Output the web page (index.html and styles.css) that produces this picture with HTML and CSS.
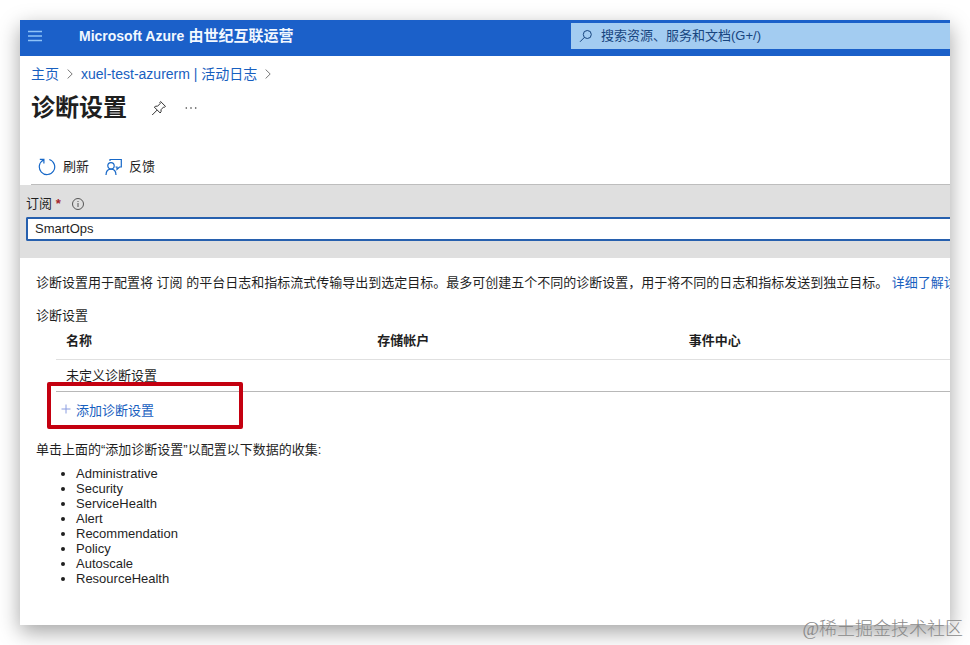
FILE: index.html
```html
<!DOCTYPE html>
<html lang="zh-CN">
<head>
<meta charset="utf-8">
<title>诊断设置 - Microsoft Azure</title>
<link rel="stylesheet" href="styles.css">
</head>
<body>
<div class="window">
  <header class="topbar">
    <button class="menu-button" type="button" aria-label="菜单">
      <svg width="14" height="12" viewBox="0 0 14 12" stroke="currentColor" stroke-width="1.3"><path d="M0 1.5h14M0 6h14M0 10.5h14"/></svg>
    </button>
    <div class="brand"><span class="brand-latin">Microsoft Azure</span> 由世纪互联运营</div>
    <label class="search">
      <svg width="14" height="14" viewBox="0 0 14 14" fill="none" stroke="currentColor"><circle cx="8.3" cy="5.5" r="4"/><path d="M5.4 8.4L1 12.8"/></svg>
      <input class="search-input" type="text" aria-label="搜索" placeholder="搜索资源、服务和文档(G+/)">
    </label>
  </header>

  <nav class="breadcrumb" aria-label="导航路径">
    <a href="#">主页</a>
    <svg width="6" height="10" viewBox="0 0 6 10" fill="none" stroke="currentColor"><path d="M.6.5L5.2 5 .6 9.500"/></svg>
    <a href="#">xuel-test-azurerm | 活动日志</a>
    <svg width="6" height="10" viewBox="0 0 6 10" fill="none" stroke="currentColor"><path d="M.6.5L5.2 5 .6 9.500"/></svg>
  </nav>

  <div class="title-row">
    <h1>诊断设置</h1>
    <button class="icon-button" type="button" aria-label="固定">
      <svg width="16" height="16" viewBox="0 0 16 16" fill="none" stroke="currentColor" stroke-linejoin="round"><path d="M9.600 1.500L14.500 6.400 13.500 7.200 12.600 7 10 9.700Q10.600 11.700 9.200 13L3.300 7.100Q4.700 5.700 6.600 6.200L9.200 3.500 8.900 2.300ZM6.200 10L1.200 15"/></svg>
    </button>
    <button class="icon-button" type="button" aria-label="更多">
      <svg width="12" height="4" viewBox="0 0 12 4" fill="currentColor"><circle cx="1.300" cy="2" r=".8"/><circle cx="6" cy="2" r=".8"/><circle cx="10.700" cy="2" r=".8"/></svg>
    </button>
  </div>

  <div class="commands">
    <button class="command" type="button">
      <svg width="18" height="18" viewBox="0 0 18 18" fill="none" stroke="currentColor" stroke-width="1.200"><path d="M5.500 2A7.700 7.700 0 1 0 11.300 1.500M1.800 1.400H5.900V5.500"/></svg>
      刷新
    </button>
    <button class="command" type="button">
      <svg width="17" height="18" viewBox="0 0 17 18" fill="none" stroke="currentColor" stroke-width="1.200"><path d="M5 3V1.500H16.300V9H14.500L12 11.300V9H10.500"/><circle cx="6" cy="7.800" r="3.200"/><path d="M1 17Q1.200 11.200 6 11.200T11 17"/></svg>
      反馈
    </button>
  </div>

  <section class="scope">
    <div class="scope-label">
      <label for="subscription">订阅 <span class="required">*</span></label>
      <svg width="12" height="12" viewBox="0 0 12 12" fill="none" stroke="currentColor"><circle cx="6" cy="6" r="5.500"/><path d="M6 5v4M6 3v1"/></svg>
    </div>
    <select class="scope-select" id="subscription"><option>SmartOps</option></select>
  </section>

  <main class="content">
    <p class="intro">诊断设置用于配置将 订阅 的平台日志和指标流式传输导出到选定目标。最多可创建五个不同的诊断设置，用于将不同的日志和指标发送到独立目标。 <a href="#">详细了解诊断设置</a></p>
    <h2>诊断设置</h2>
    <table class="settings">
      <thead><tr><th>名称</th><th>存储帐户</th><th>事件中心</th></tr></thead>
      <tbody><tr><td colspan="3">未定义诊断设置</td></tr></tbody>
    </table>
    <div class="add-row">
      <a class="add-link" href="#">
        <svg width="10" height="14" viewBox="0 0 10 14" stroke="currentColor"><path d="M5 .5v9M.5 5h9"/></svg>
        添加诊断设置
      </a>
      <div class="highlight"></div>
    </div>
    <p class="hint">单击上面的“添加诊断设置”以配置以下数据的收集:</p>
    <ul class="categories">
      <li>Administrative</li>
      <li>Security</li>
      <li>ServiceHealth</li>
      <li>Alert</li>
      <li>Recommendation</li>
      <li>Policy</li>
      <li>Autoscale</li>
      <li>ResourceHealth</li>
    </ul>
  </main>
</div>
<div class="watermark">@稀土掘金技术社区</div>
</body>
</html>
```
FILE: styles.css
```css
* {
  box-sizing: border-box;
}

body {
  margin: 0;
  min-height: 100vh;
  padding: 20px;
  display: grid;
  position: relative;
  background: #fff;
  color: #1f1f1f;
  font: 13px/20px "Liberation Sans", "Noto Sans CJK SC", sans-serif;
}

button,
input,
select {
  margin: 0;
  padding: 0;
  border: 0;
  background: none;
  color: inherit;
  font: inherit;
}

a {
  color: #1860c0;
  text-decoration: none;
}

svg {
  display: block;
  flex: none;
}

h1,
h2,
p,
ul {
  margin: 0;
}

.window {
  min-width: 0;
  overflow: hidden;
  background: #fff;
  box-shadow: 0 7px 20px rgba(0, 0, 0, 0.36);
}

.topbar {
  display: flex;
  height: 36px;
  padding: 3px 0 7px 8px;
  align-items: center;
  background: #1b60c9;
}

.menu-button {
  width: 51px;
  color: #8fc3f8;
}

.brand {
  flex: 1;
  color: #f2f8ff;
  font-size: 15px;
  font-weight: 700;
  white-space: nowrap;
}

.brand-latin {
  font-size: 14px;
}

.search {
  display: flex;
  width: 379px;
  height: 26px;
  padding-left: 8px;
  gap: 8px;
  align-items: center;
  background: #a3ccf1;
  color: #17457f;
}

.search-input {
  flex: 1;
  min-width: 0;
  outline: 0;
}

.search-input::placeholder {
  color: inherit;
}

.breadcrumb {
  display: flex;
  padding: 8px 11px 0;
  gap: 8px;
  align-items: center;
  color: #777;
  font-size: 14px;
}

.title-row {
  display: flex;
  height: 44px;
  padding: 3px 0 0 11px;
  align-items: center;
  gap: 18px;
}

h1 {
  margin-right: 6px;
  font-size: 24px;
  line-height: 32px;
}

.icon-button {
  color: #333;
}

.commands {
  display: flex;
  height: 57px;
  margin-left: 11px;
  padding: 29px 0 7px 7px;
  gap: 16px;
  align-items: center;
  border-bottom: 1px solid #bdbdbd;
}

.command {
  display: flex;
  gap: 7px;
  align-items: center;
}

.command svg {
  color: #1768c8;
}

.scope {
  padding: 9px 0 17px 6px;
  background: #dfdfdf;
}

.scope-label {
  display: flex;
  margin-bottom: 3px;
  gap: 11px;
  align-items: center;
}

.scope-label svg {
  color: #555;
}

.required {
  color: #a4262c;
  font-weight: 700;
}

.scope-select {
  display: block;
  width: 100%;
  height: 24px;
  padding-left: 7px;
  border: 2px solid #2760ae;
  border-right: 0;
  border-radius: 2px 0 0 2px;
  background: #fff;
  appearance: none;
}

.content {
  padding: 15px 0 38px 16px;
}

.intro {
  white-space: nowrap;
}

h2 {
  margin-top: 13px;
  font-size: 13px;
  font-weight: 400;
}

.settings {
  width: calc(100% + 20px);
  margin-left: 20px;
  table-layout: fixed;
  border-collapse: collapse;
  text-align: left;
}

.settings th {
  height: 33px;
  padding: 0 10px 2px;
  border-bottom: 1px solid #e0e0e0;
}

.settings td {
  height: 32px;
  padding: 2px 10px 0;
  border-bottom: 1px solid #b8b8b8;
}

.add-row {
  display: flex;
  position: relative;
  padding: 9px 0 9px 25px;
}

.add-link {
  display: flex;
  gap: 5px;
  align-items: center;
}

.add-link svg {
  color: #8a9ce0;
}

.highlight {
  position: absolute;
  top: -10px;
  left: 11px;
  width: 196px;
  height: 47px;
  border: 4px solid #c40010;
  border-radius: 2px;
  pointer-events: none;
}

.hint {
  margin-top: 10px;
}

.categories {
  margin-top: 6px;
  padding-left: 40px;
  line-height: 15px;
}

.watermark {
  position: absolute;
  right: 7px;
  bottom: 4px;
  color: #8a8a8a;
  font: 300 18px/24px "Liberation Serif", "Noto Sans CJK SC", serif;
}
```
